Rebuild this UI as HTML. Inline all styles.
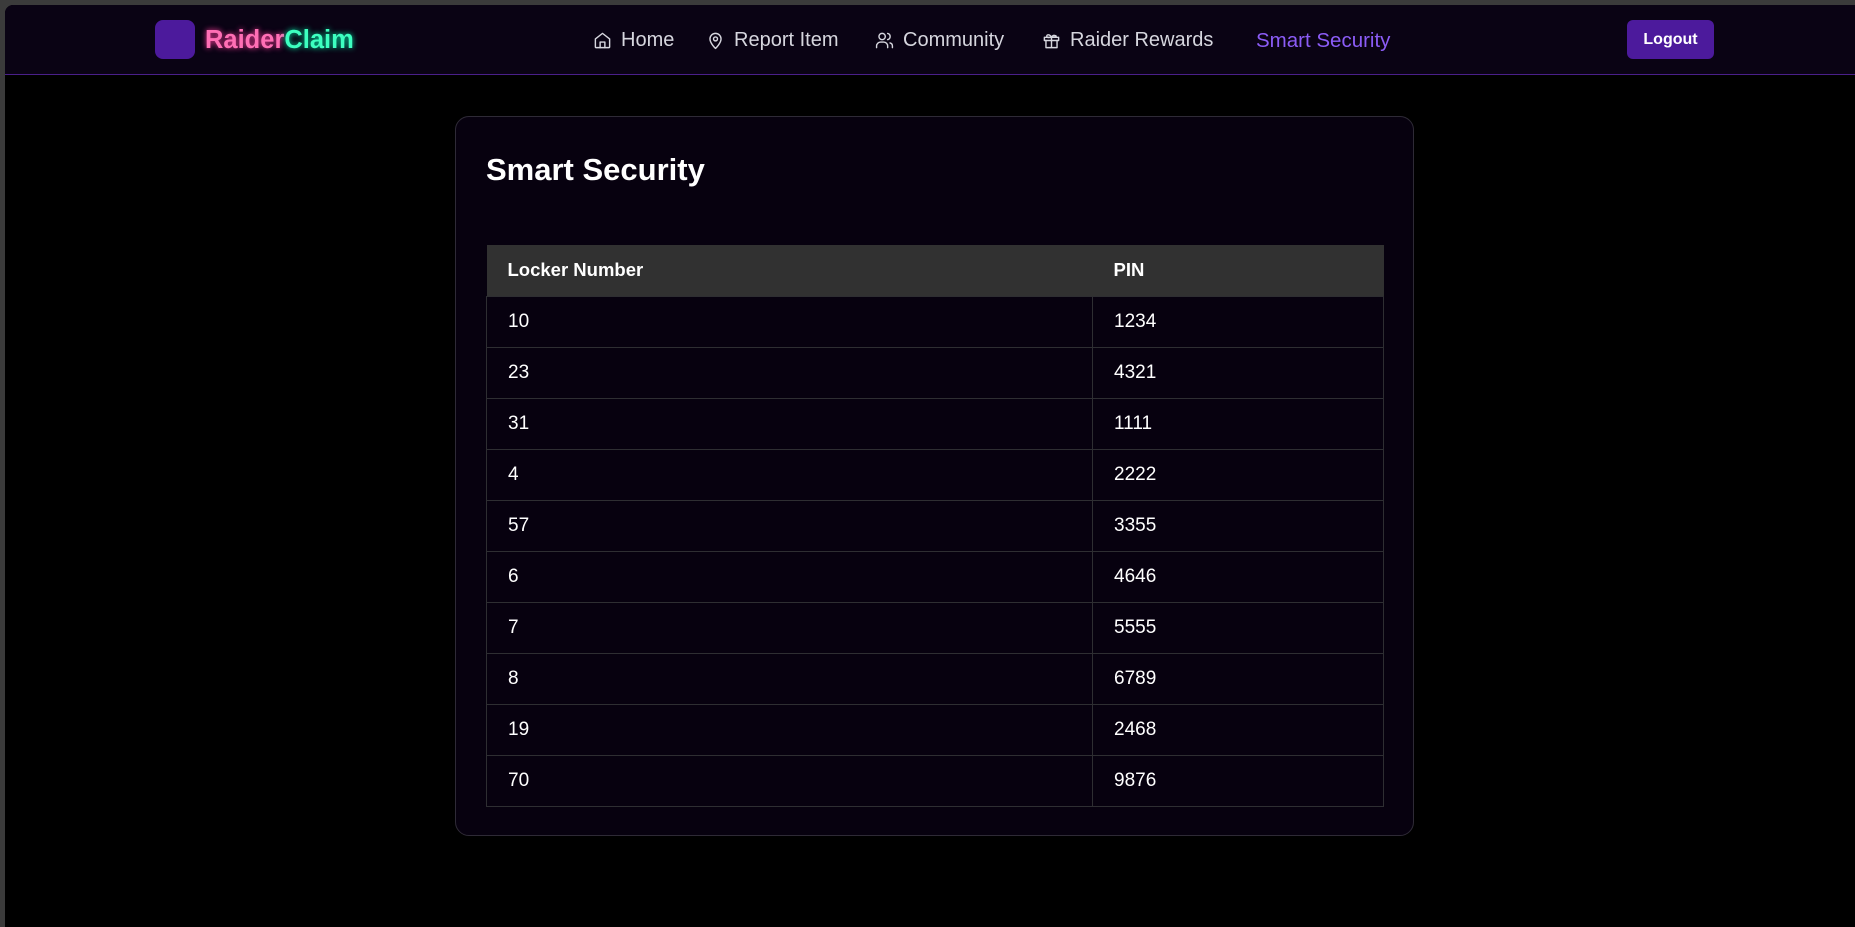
<!DOCTYPE html>
<html><head><meta charset="utf-8"><style>
*{margin:0;padding:0;box-sizing:border-box}
html,body{width:1855px;height:927px;overflow:hidden;background:#3b3b3b;font-family:"Liberation Sans",sans-serif}
#app{position:absolute;left:5px;top:5px;right:0;bottom:0;background:#000;border-top-left-radius:8px;overflow:hidden}
nav{position:absolute;left:0;top:0;right:0;height:70px;background:#0a0314;border-bottom:1px solid #4a1f8a}
.logo{position:absolute;left:150px;top:15px;width:40px;height:39px;background:#4c1a9c;border-radius:8px}
.brand{position:absolute;left:200px;top:21px;font-size:25.5px;font-weight:bold;letter-spacing:0}
.brand .a{color:#ff6fb5;text-shadow:0 0 6px #ff3d9e}
.brand .b{color:#3dffc0;text-shadow:0 0 6px #00e0a0}
.item{position:absolute;top:24px;font-size:20px;color:#d6d6de;display:flex;align-items:center;gap:9px;white-space:nowrap}
.item svg{width:19px;height:19px;stroke:#d6d6de;fill:none;stroke-width:1.8;stroke-linecap:round;stroke-linejoin:round}
.active{color:#8b5cf6;font-size:20.5px}
.logout{position:absolute;left:1622px;top:15px;width:87px;height:39px;background:#4c1a9c;border-radius:6px;color:#fff;font-weight:bold;font-size:16px;text-align:center;line-height:39px}
.card{position:absolute;left:450px;top:111px;width:959px;height:720px;background:#07010f;border:1px solid #2e2a36;border-radius:14px}
h1{position:absolute;left:30px;top:35px;font-size:31px;color:#fff;font-weight:bold}
table{position:absolute;left:30px;top:128px;width:898px;border-collapse:collapse;font-size:19px;color:#fff}
th{background:#313131;height:51px;text-align:left;padding-left:21px;font-size:18.5px;font-weight:bold}
td{height:51px;padding-left:21px;border:1px solid #2e2e32}
td:first-child{width:606px}
</style></head><body><div id="app">
<nav>
<div class="logo"></div>
<div class="brand"><span class="a">Raider</span><span class="b">Claim</span></div>
<div class="item" style="left:588px"><svg viewBox="0 0 24 24"><path d="M3 10l9-7 9 7v10a1 1 0 0 1-1 1H4a1 1 0 0 1-1-1z"/><path d="M9 21v-7h6v7"/></svg>Home</div>
<div class="item" style="left:701px"><svg viewBox="0 0 24 24"><path d="M12 22s-7-6.5-7-12a7 7 0 0 1 14 0c0 5.5-7 12-7 12z"/><circle cx="12" cy="10" r="2.5"/></svg>Report Item</div>
<div class="item" style="left:870px"><svg viewBox="0 0 24 24"><circle cx="9" cy="7" r="4"/><path d="M2 21v-2a5 5 0 0 1 5-5h4a5 5 0 0 1 5 5v2"/><path d="M16 3.1a4 4 0 0 1 0 7.8M22 21v-2a4 4 0 0 0-3-3.9"/></svg>Community</div>
<div class="item" style="left:1037px"><svg viewBox="0 0 24 24"><rect x="3" y="8" width="18" height="4"/><path d="M5 12v9h14v-9M12 8v13"/><path d="M12 8c-2-4-6-4-6-1.5S9 8 12 8c3 0 6-1 6-1.5S14 4 12 8z"/></svg>Raider Rewards</div>
<div class="item active" style="left:1251px">Smart Security</div>
<div class="logout">Logout</div>
</nav>
<div class="card">
<h1>Smart Security</h1>
<table>
<tr><th>Locker Number</th><th>PIN</th></tr>
<tr><td>10</td><td>1234</td></tr>
<tr><td>23</td><td>4321</td></tr>
<tr><td>31</td><td>1111</td></tr>
<tr><td>4</td><td>2222</td></tr>
<tr><td>57</td><td>3355</td></tr>
<tr><td>6</td><td>4646</td></tr>
<tr><td>7</td><td>5555</td></tr>
<tr><td>8</td><td>6789</td></tr>
<tr><td>19</td><td>2468</td></tr>
<tr><td>70</td><td>9876</td></tr>
</table>
</div>
</div></body></html>
